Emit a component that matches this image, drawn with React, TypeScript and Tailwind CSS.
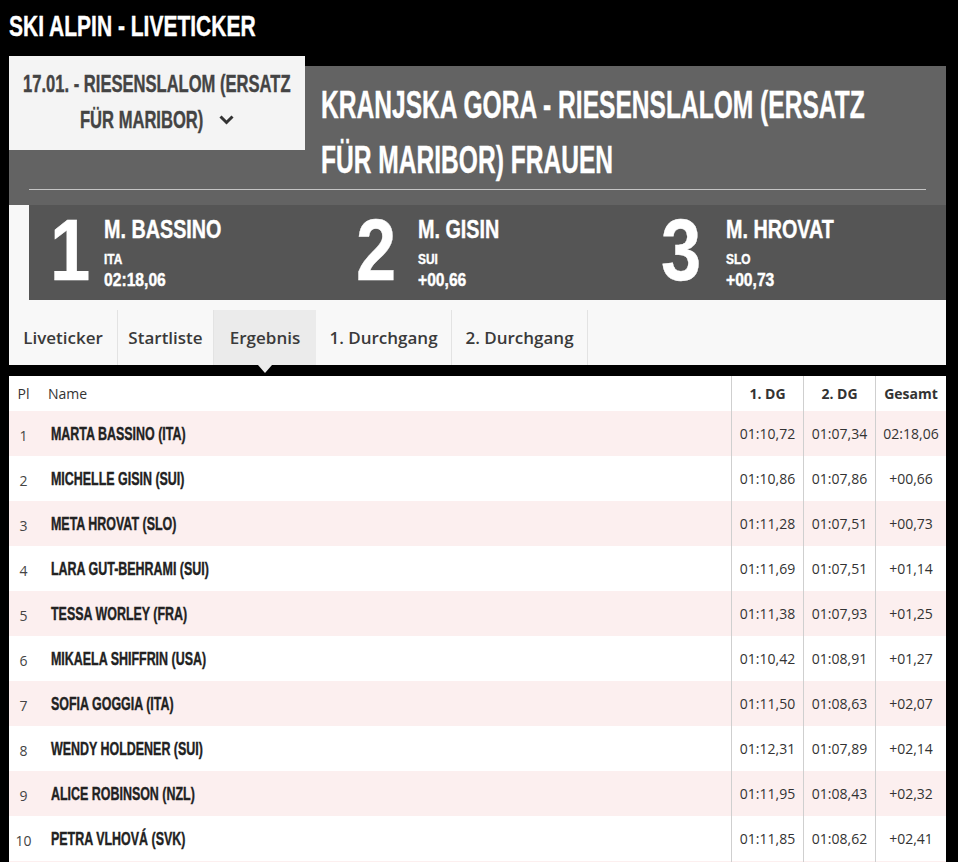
import * as React from "react";

// no narrow face is installed, so the condensed look is a squeezed Liberation Sans Bold
const narrow =
  "font-['Liberation_Sans',Arial,sans-serif] font-bold [-webkit-text-stroke-width:0.4px]";

const podium = [
  { rank: "1", gap: "ml-[6px]", name: "M. BASSINO", nation: "ITA", time: "02:18,06" },
  { rank: "2", gap: "ml-[14px]", name: "M. GISIN", nation: "SUI", time: "+00,66" },
  { rank: "3", gap: "ml-[16px]", name: "M. HROVAT", nation: "SLO", time: "+00,73" },
];

const tabs = [
  { label: "Liveticker", width: "w-[109px]" },
  { label: "Startliste", width: "w-[96px]" },
  { label: "Ergebnis", width: "w-[102px]", active: true },
  { label: "1. Durchgang", width: "w-[136px]" },
  { label: "2. Durchgang", width: "w-[136px]" },
];

const results = [
  ["1", "MARTA BASSINO (ITA)", "01:10,72", "01:07,34", "02:18,06"],
  ["2", "MICHELLE GISIN (SUI)", "01:10,86", "01:07,86", "+00,66"],
  ["3", "META HROVAT (SLO)", "01:11,28", "01:07,51", "+00,73"],
  ["4", "LARA GUT-BEHRAMI (SUI)", "01:11,69", "01:07,51", "+01,14"],
  ["5", "TESSA WORLEY (FRA)", "01:11,38", "01:07,93", "+01,25"],
  ["6", "MIKAELA SHIFFRIN (USA)", "01:10,42", "01:08,91", "+01,27"],
  ["7", "SOFIA GOGGIA (ITA)", "01:11,50", "01:08,63", "+02,07"],
  ["8", "WENDY HOLDENER (SUI)", "01:12,31", "01:07,89", "+02,14"],
  ["9", "ALICE ROBINSON (NZL)", "01:11,95", "01:08,43", "+02,32"],
  ["10", "PETRA VLHOVÁ (SVK)", "01:11,85", "01:08,62", "+02,41"],
  ["", "", "", "", ""],
];

const cols = "grid grid-cols-[29px_1fr_72px_72px_71px]";

export default function App() {
  return (
    <div className="min-h-screen overflow-hidden bg-black font-['Open_Sans',sans-serif] text-[#333]">
      <div className="h-[66px] pl-[9px] pt-[11px]">
        <h1
          className={`${narrow} w-max origin-left scale-x-[0.7] text-[30px] leading-[30px] text-white`}
        >
          SKI ALPIN - LIVETICKER
        </h1>
      </div>

      {/* event header */}
      <section className="ml-[9px] w-[937px] bg-[#636363] pb-[15px]">
        <div className="flex">
          <div className="-mt-[10px] h-[94px] w-[296px] shrink-0 bg-[#f4f4f4] pt-[10px] text-[#444]">
            <div className="flex flex-col items-center">
              <span
                className={`${narrow} w-max scale-x-[0.69] text-[24px] leading-[36px]`}
              >
                17.01. - RIESENSLALOM (ERSATZ
              </span>
              <div className="flex items-center">
                <span
                  className={`${narrow} -mr-[55px] w-max origin-left scale-x-[0.69] text-[24px] leading-[36px]`}
                >
                  FÜR MARIBOR)
                </span>
                <svg
                  className="ml-[15px]"
                  width="15"
                  height="10"
                  viewBox="0 0 15 10"
                  fill="none"
                  stroke="#333"
                  strokeWidth="3"
                >
                  <path d="M1.5 1.5 7.5 7.5 13.5 1.5" />
                </svg>
              </div>
            </div>
          </div>
          <div className="pl-[16px] pt-[11px] text-white">
            <div
              className={`${narrow} w-max origin-left scale-x-[0.63] text-[39px] leading-[55px]`}
            >
              KRANJSKA GORA - RIESENSLALOM (ERSATZ
            </div>
            <div
              className={`${narrow} w-max origin-left scale-x-[0.63] text-[39px] leading-[55px]`}
            >
              FÜR MARIBOR) FRAUEN
            </div>
          </div>
        </div>
        <div className="mx-[20px] mt-[2px] h-px bg-[#c4c4c4]" />
      </section>

      {/* podium + tabs */}
      <section className="ml-[9px] mt-[25px] w-[937px] bg-[#f8f8f8]">
        <div className="-mt-[25px] ml-[20px] grid h-[95px] grid-cols-3 bg-[#555]">
          {podium.map((p) => (
            <div key={p.rank} className="flex pl-[21px] text-white">
              <div
                className={`${narrow} origin-left scale-x-[0.83] pt-px text-[87px] leading-[87px]`}
              >
                {p.rank}
              </div>
              <div className={`${narrow} ${p.gap} pt-[12px]`}>
                <div className="w-max origin-left scale-x-[0.79] text-[25px] leading-[25px]">
                  {p.name}
                </div>
                <div className="mt-[10px] w-max origin-left scale-x-[0.85] text-[14px] leading-[14px]">
                  {p.nation}
                </div>
                <div className="mt-[5px] w-max origin-left scale-x-[0.87] text-[18px] leading-[18px]">
                  {p.time}
                </div>
              </div>
            </div>
          ))}
        </div>
        <nav className="flex h-[65px] items-end">
          {tabs.map((t) => (
            <div
              key={t.label}
              className={`relative flex h-[55px] items-center justify-center text-[17px] font-semibold text-[#3a3a3a] ${t.width} ${
                t.active ? "bg-[#ebebeb]" : "border-r border-[#e3e3e3]"
              }`}
            >
              {t.label}
              {t.active && (
                <span className="absolute left-1/2 top-full -translate-x-1/2 border-x-[7px] border-t-[8px] border-x-transparent border-t-[#ebebeb]" />
              )}
            </div>
          ))}
        </nav>
      </section>

      {/* result table */}
      <section className="ml-[9px] mt-[11px] w-[937px] bg-white text-[14px]">
        <div className={`${cols} h-[35px] items-stretch`}>
          <div className="flex items-center justify-center">Pl</div>
          <div className="flex items-center pl-[10px]">Name</div>
          <div className="flex items-center justify-center border-l border-[#cfcfcf] font-bold">
            1. DG
          </div>
          <div className="flex items-center justify-center border-l border-[#cfcfcf] font-bold">
            2. DG
          </div>
          <div className="flex items-center justify-center border-l border-[#cfcfcf] font-bold">
            Gesamt
          </div>
        </div>
        {results.map((r, i) => (
          <div
            key={i}
            className={`${cols} h-[45px] ${i % 2 === 0 ? "bg-[#fcefef]" : "bg-white"}`}
          >
            <div className="flex items-center justify-center pt-[4px] text-[#444]">
              {r[0]}
            </div>
            <div className="flex items-center pl-[13px]">
              <span
                className={`${narrow} w-max origin-left scale-x-[0.655] text-[19px] leading-[22px] text-[#222]`}
              >
                {r[1]}
              </span>
            </div>
            <div className="flex items-center justify-center border-l border-[#cfcfcf]">
              {r[2]}
            </div>
            <div className="flex items-center justify-center border-l border-[#cfcfcf]">
              {r[3]}
            </div>
            <div className="flex items-center justify-center border-l border-[#cfcfcf]">
              {r[4]}
            </div>
          </div>
        ))}
      </section>
    </div>
  );
}
